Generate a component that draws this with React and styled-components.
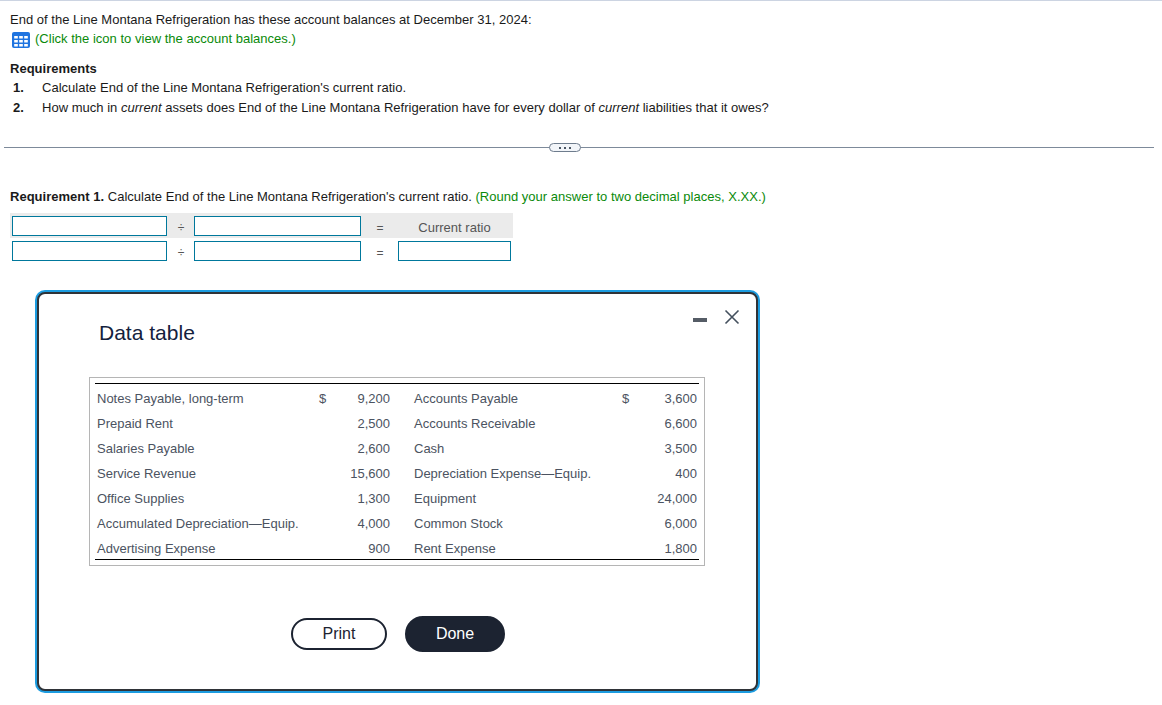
import React from "react";
import styled, { createGlobalStyle } from "styled-components";

const GlobalStyle = createGlobalStyle`
  html, body {
    margin: 0;
    padding: 0;
    background: #fff;
  }
  body {
    font-family: "Liberation Sans", Arial, sans-serif;
    font-size: 13px;
    color: #1a1a1a;
  }
`;

const leftRows = [
  ["Notes Payable, long-term", "$", "9,200"],
  ["Prepaid Rent", "", "2,500"],
  ["Salaries Payable", "", "2,600"],
  ["Service Revenue", "", "15,600"],
  ["Office Supplies", "", "1,300"],
  ["Accumulated Depreciation\u2014Equip.", "", "4,000"],
  ["Advertising Expense", "", "900"],
];

const rightRows = [
  ["Accounts Payable", "$", "3,600"],
  ["Accounts Receivable", "", "6,600"],
  ["Cash", "", "3,500"],
  ["Depreciation Expense\u2014Equip.", "", "400"],
  ["Equipment", "", "24,000"],
  ["Common Stock", "", "6,000"],
  ["Rent Expense", "", "1,800"],
];

function TableIcon() {
  return (
    <svg width="18" height="16" viewBox="0 0 18 16">
      <rect x="0" y="0" width="18" height="16" rx="2" fill="#1f74e0" />
      <g fill="#fff">
        {[4, 8, 12].map((y) =>
          [2.2, 7.2, 12.2].map((x) => (
            <rect key={`${x}-${y}`} x={x} y={y} width="3.6" height="2.5" />
          ))
        )}
      </g>
    </svg>
  );
}

function App() {
  return (
    <Page>
      <GlobalStyle />
      <Intro>End of the Line Montana Refrigeration has these account balances at December 31, 2024:</Intro>
      <IconRow>
        <TableIcon />
        <IconHint>(Click the icon to view the account balances.)</IconHint>
      </IconRow>

      <Requirements>
        <strong>Requirements</strong>
        <ReqItem>
          <b>1.</b>
          <span>Calculate End of the Line Montana Refrigeration's current ratio.</span>
        </ReqItem>
        <ReqItem>
          <b>2.</b>
          <span>
            How much in <em>current</em> assets does End of the Line Montana Refrigeration have for every dollar of{" "}
            <em>current</em> liabilities that it owes?
          </span>
        </ReqItem>
      </Requirements>

      <Divider>
        <Pill>
          <i />
          <i />
          <i />
        </Pill>
      </Divider>

      <Question>
        <strong>Requirement 1.</strong> Calculate End of the Line Montana Refrigeration's current ratio.{" "}
        <Hint>(Round your answer to two decimal places, X.XX.)</Hint>
      </Question>

      <Formula>
        <HeadCell><Field /></HeadCell>
        <HeadCell><Sign>÷</Sign></HeadCell>
        <HeadCell><Field /></HeadCell>
        <HeadCell><Sign>=</Sign></HeadCell>
        <HeadCell><RatioLabel>Current ratio</RatioLabel></HeadCell>
        <BodyCell><Field /></BodyCell>
        <BodyCell><Sign>÷</Sign></BodyCell>
        <BodyCell><Field /></BodyCell>
        <BodyCell><Sign>=</Sign></BodyCell>
        <BodyCell><Field $narrow /></BodyCell>
      </Formula>

      <Dialog>
        <Controls>
          <MinimizeBar />
          <svg width="16" height="16" viewBox="0 0 16 16">
            <path d="M1.5 1.5 L14.5 14.5 M14.5 1.5 L1.5 14.5" stroke="#44505e" strokeWidth="1.6" fill="none" />
          </svg>
        </Controls>
        <Title>Data table</Title>
        <TableFrame>
          <DataTable>
            <tbody>
              {leftRows.map((row, i) => (
                <tr key={row[0]}>
                  <NameCell $w={224} $pad={2}>{row[0]}</NameCell>
                  <DollarCell>{row[1]}</DollarCell>
                  <AmountCell $w={46}>{row[2]}</AmountCell>
                  <NameCell $w={230} $pad={22}>{rightRows[i][0]}</NameCell>
                  <DollarCell>{rightRows[i][1]}</DollarCell>
                  <AmountCell $w={50}>{rightRows[i][2]}</AmountCell>
                </tr>
              ))}
            </tbody>
          </DataTable>
        </TableFrame>
        <Buttons>
          <PrintButton>Print</PrintButton>
          <DoneButton>Done</DoneButton>
        </Buttons>
      </Dialog>
    </Page>
  );
}

export default App;

const Page = styled.div`
  position: relative;
  box-sizing: border-box;
  width: 1162px;
  height: 705px;
  overflow: hidden;
  border-top: 1px solid #ccd4e2;
  padding: 11px 10px 0;
  letter-spacing: 0.015px;
`;

const Intro = styled.div`
  line-height: 15px;
`;

const IconRow = styled.div`
  display: flex;
  align-items: flex-start;
  gap: 5px;
  margin: 5px 0 0 2px;
  height: 17px;
`;

const Hint = styled.span`
  color: #0a8a0a;
`;

const IconHint = styled(Hint)`
  line-height: 13px;
`;

const Requirements = styled.div`
  margin-top: 11px;
  line-height: 20px;
  strong {
    display: block;
    line-height: 18px;
  }
`;

const ReqItem = styled.div`
  display: grid;
  grid-template-columns: 32px 1fr;
  b {
    padding-left: 3px;
  }
`;

const Divider = styled.div`
  position: relative;
  margin: 29px 0 0 -6px;
  width: 1150px;
  height: 1px;
  background: #7d8a9a;
`;

const Pill = styled.div`
  position: absolute;
  left: 545px;
  top: -4px;
  box-sizing: border-box;
  width: 32px;
  height: 9px;
  display: flex;
  align-items: center;
  justify-content: center;
  gap: 3px;
  background: #f2f5f9;
  border: 1px solid #6e7c8d;
  border-radius: 5px;
  i {
    width: 2px;
    height: 2px;
    background: #4a5664;
  }
`;

const Question = styled.div`
  margin-top: 41px;
  line-height: 15px;
`;

const Formula = styled.div`
  display: grid;
  grid-template-columns: 158px 24px 170px 34px 117px;
  width: 503px;
  margin-top: 9px;
  color: #555;
`;

const HeadCell = styled.div`
  display: flex;
  align-items: center;
  justify-content: center;
  height: 25px;
  background: #ebebeb;
`;

const BodyCell = styled(HeadCell)`
  margin-top: 2px;
  height: 21px;
  background: none;
`;

const RatioLabel = styled.span`
  padding-top: 3px;
`;

const Field = styled.div`
  box-sizing: border-box;
  flex: none;
  width: ${(p) => (p.$narrow ? "113px" : "calc(100% - 3px)")};
  height: 20px;
  margin: 1px ${(p) => (p.$narrow ? "2px" : "1px")} 0 2px;
  background: #fff;
  border: 1px solid #00789c;
`;

const Sign = styled.span`
  padding: 4px 0 0 2px;
  font-size: 12px;
  color: #555;
`;

const Dialog = styled.div`
  position: absolute;
  left: 37px;
  top: 291px;
  box-sizing: border-box;
  width: 721px;
  height: 399px;
  padding: 26px 0 0 50px;
  background: #fff;
  border: 2px solid #2f3338;
  border-radius: 8px;
  box-shadow: 0 0 0 2px #1c9ce0;
`;

const Controls = styled.div`
  position: absolute;
  top: 15px;
  right: 16px;
  display: flex;
  align-items: center;
  gap: 17px;
`;

const MinimizeBar = styled.span`
  width: 14px;
  height: 4px;
  margin-top: 5px;
  background: #555c66;
`;

const Title = styled.h2`
  margin: 0 0 0 10px;
  font-size: 21px;
  font-weight: 400;
  line-height: 26px;
  color: #14213d;
`;

const TableFrame = styled.div`
  box-sizing: border-box;
  width: 616px;
  height: 189px;
  margin-top: 31px;
  padding: 5px;
  border: 1px solid #b5b5b5;
  letter-spacing: 0;
`;

const DataTable = styled.table`
  width: 604px;
  border-collapse: collapse;
  table-layout: fixed;
  border-top: 1px solid #000;
  border-bottom: 1px solid #000;
  color: #4b5361;
  tr {
    height: 25px;
  }
  tr:first-child {
    height: 27px;
  }
  tr:first-child td {
    padding-top: 2px;
  }
  tr:last-child {
    height: 24px;
  }
  tr:last-child td {
    padding-top: 3px;
  }
`;

const NameCell = styled.td`
  box-sizing: border-box;
  width: ${(p) => p.$w}px;
  padding: 0 0 0 ${(p) => p.$pad}px;
`;

const DollarCell = styled.td`
  box-sizing: border-box;
  width: 27px;
  padding: 0;
`;

const AmountCell = styled.td`
  box-sizing: border-box;
  width: ${(p) => p.$w}px;
  padding: 0 2px 0 0;
  text-align: right;
`;

const Buttons = styled.div`
  display: flex;
  justify-content: center;
  align-items: center;
  gap: 18px;
  width: 616px;
  margin-top: 50px;
  padding-left: 2px;
  box-sizing: border-box;
`;

const PrintButton = styled.button`
  box-sizing: border-box;
  width: 96px;
  height: 32px;
  font: 16px "Liberation Sans", Arial, sans-serif;
  color: #1c2331;
  background: #fff;
  border: 2px solid #1c2331;
  border-radius: 16px;
`;

const DoneButton = styled(PrintButton)`
  width: 100px;
  height: 36px;
  color: #fff;
  background: #1c2331;
  border-radius: 18px;
`;
